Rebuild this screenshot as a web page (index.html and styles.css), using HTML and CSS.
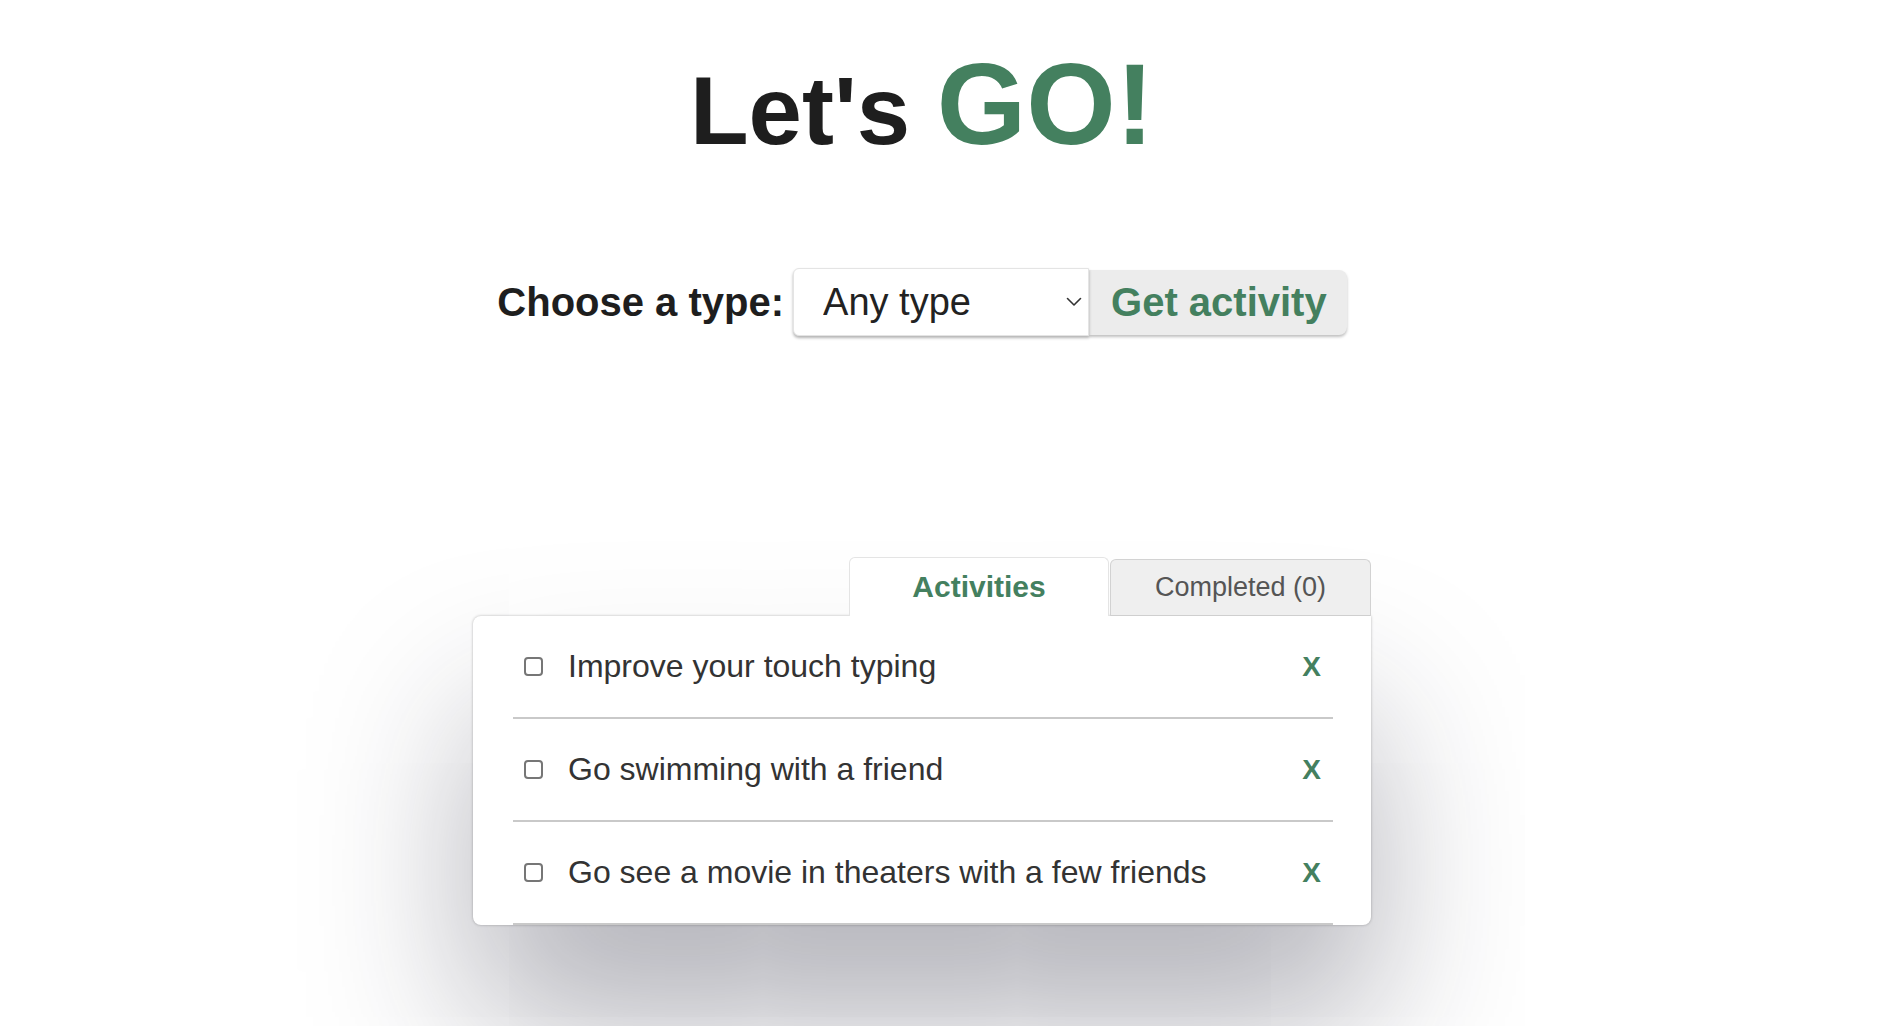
FILE: index.html
```html
<!DOCTYPE html>
<html lang="en">
<head>
<meta charset="utf-8">
<title>Let's GO!</title>
<link rel="stylesheet" href="styles.css">
</head>
<body>
<main class="page">
  <h1 class="title">Let's <span class="go">GO!</span></h1>

  <div class="chooser">
    <label class="chooser-label" for="type">Choose a type:</label>
    <div class="select-wrap">
      <select class="select" id="type">
        <option>Any type</option>
      </select>
      <svg class="chevron" width="16" height="10" viewBox="0 0 16 10" aria-hidden="true">
        <path d="M1.5 1.5 L8 8 L14.5 1.5" fill="none" stroke="#333" stroke-width="1.6" stroke-linecap="round" stroke-linejoin="round"/>
      </svg>
    </div>
    <button class="get-btn" type="button">Get activity</button>
  </div>

  <section class="board">
    <div class="tabs">
      <div class="tab tab-active">Activities</div>
      <div class="tab">Completed (0)</div>
    </div>
    <div class="card">
      <ul class="list">
        <li class="item">
          <input type="checkbox" class="check">
          <span class="item-text">Improve your touch typing</span>
          <span class="remove">X</span>
        </li>
        <li class="item">
          <input type="checkbox" class="check">
          <span class="item-text">Go swimming with a friend</span>
          <span class="remove">X</span>
        </li>
        <li class="item">
          <input type="checkbox" class="check">
          <span class="item-text">Go see a movie in theaters with a few friends</span>
          <span class="remove">X</span>
        </li>
      </ul>
    </div>
  </section>
</main>
</body>
</html>
```

FILE: styles.css
```css
html, body {
  margin: 0;
  padding: 0;
  background: #ffffff;
}

body {
  font-family: "Liberation Sans", Arial, sans-serif;
  color: #1e1e1e;
}

.page {
  display: flex;
  flex-direction: column;
  align-items: center;
  padding-right: 52px;
  min-height: 1026px;
  box-sizing: border-box;
  overflow: hidden;
}

.title {
  margin: 47px 0 0;
  font-size: 96px;
  line-height: 1;
  font-weight: 700;
  color: #1e1e1e;
}

.go {
  font-size: 115px;
  color: #44805f;
}

.chooser {
  margin-top: 106px;
  display: flex;
  align-items: center;
}

.chooser-label {
  font-size: 40px;
  font-weight: 700;
  color: #1e1e1e;
  margin-right: 9px;
}

.select-wrap {
  position: relative;
  z-index: 1;
}

.select {
  appearance: none;
  -webkit-appearance: none;
  display: block;
  width: 296px;
  height: 68px;
  box-sizing: border-box;
  padding: 0 40px 0 29px;
  font-family: "Liberation Sans", Arial, sans-serif;
  font-size: 38px;
  color: #222;
  background: #fff;
  border: 1px solid #e4e4e4;
  border-radius: 6px 0 0 6px;
  box-shadow: 0 2px 3px rgba(0, 0, 0, 0.3);
  outline: none;
}

.chevron {
  position: absolute;
  right: 7px;
  top: 29px;
  pointer-events: none;
}

.get-btn {
  height: 65px;
  padding: 0 20px 0 22px;
  font-family: "Liberation Sans", Arial, sans-serif;
  font-size: 40px;
  font-weight: 700;
  color: #44805f;
  background: #ececec;
  border: none;
  border-radius: 0 8px 8px 0;
  box-shadow: 0 2px 3px rgba(0, 0, 0, 0.25);
  cursor: pointer;
}

.board {
  margin-top: 221px;
  width: 898px;
}

.tabs {
  display: flex;
  justify-content: flex-end;
  align-items: flex-end;
  gap: 1px;
  position: relative;
  z-index: 2;
}

.tab {
  box-sizing: border-box;
  width: 261px;
  height: 57px;
  display: flex;
  align-items: center;
  justify-content: center;
  background: #efefef;
  border: 1px solid #d2d2d2;
  border-bottom: 1px solid #cfcfcf;
  border-radius: 6px 6px 0 0;
  font-size: 27px;
  color: #555;
}

.tab-active {
  width: 260px;
  height: 59px;
  background: #fff;
  border-color: #e4e4e4;
  border-bottom: none;
  color: #44805f;
  font-weight: 700;
  font-size: 30px;
}

.card {
  background: #fff;
  border-radius: 8px 0 8px 8px;
  box-shadow: 0 0 3px rgba(0, 0, 0, 0.28), 0 100px 160px rgba(30, 30, 50, 0.34);
  padding: 0 38px 0 40px;
  position: relative;
  z-index: 1;
}

.list {
  list-style: none;
  margin: 0;
  padding: 0;
}

.item {
  display: flex;
  align-items: center;
  height: 101px;
  padding: 0 12px 0 11px;
  border-bottom: 2px solid #c9c9c9;
}

.check {
  appearance: none;
  -webkit-appearance: none;
  box-sizing: border-box;
  width: 19px;
  height: 19px;
  margin: 0 25px 0 0;
  border: 2px solid #767676;
  border-radius: 4px;
  background: #fff;
}

.item-text {
  flex: 1;
  font-size: 32px;
  color: #333;
}

.remove {
  font-size: 28px;
  font-weight: 700;
  color: #44805f;
}
```
